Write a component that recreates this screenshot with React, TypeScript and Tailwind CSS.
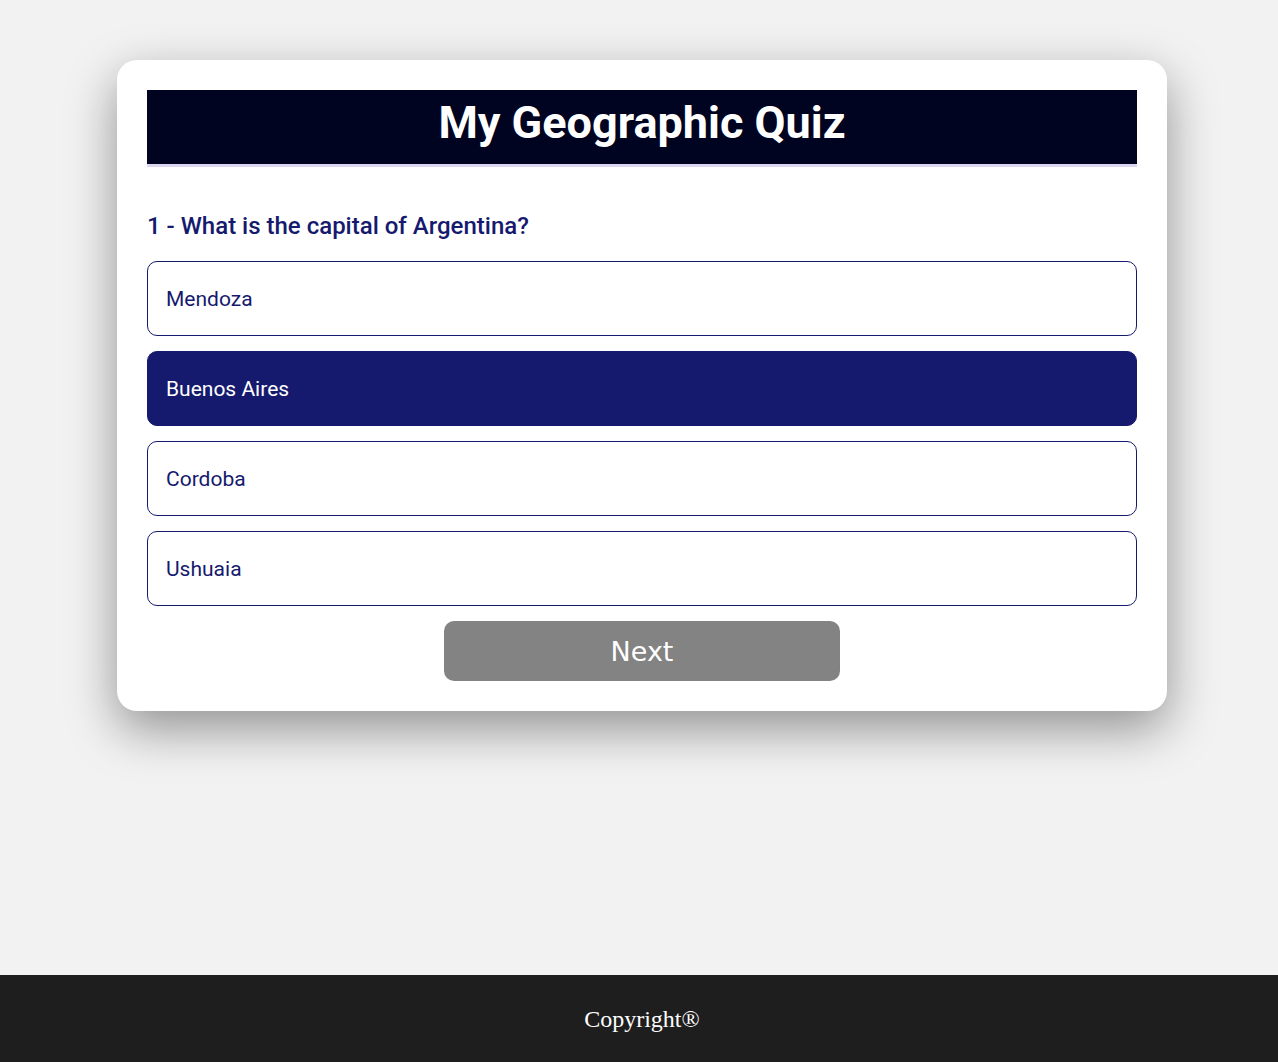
const options = ["Mendoza", "Buenos Aires", "Cordoba", "Ushuaia"];

export default function App() {
  const selected = 1;
  return (
    <div className="flex min-h-screen flex-col bg-[#f2f2f2] font-['Roboto',sans-serif]">
      <main className="flex-1 pt-[60px]">
        <section className="ml-[117px] w-[1050px] rounded-[20px] bg-white p-[30px] shadow-[0_18px_50px_rgba(0,0,0,0.4)]">
          <header className="border-b-[3px] border-[#dcd6f0] bg-[#000420] pb-[15px] pt-[7px] text-center">
            <h1 className="text-[45px] leading-[52px] font-bold text-white">My Geographic Quiz</h1>
          </header>
          <h2 className="mt-[43px] mb-[19px] text-[24px] leading-[32px] font-medium text-[#151a6e]">
            1 - What is the capital of Argentina?
          </h2>
          <div className="flex flex-col gap-[15px]">
            {options.map((opt, i) => (
              <button
                key={opt}
                type="button"
                className={
                  i === selected
                    ? "h-[75px] rounded-[10px] border border-[#151a6e] bg-[#151a6e] px-[18px] pt-[2px] text-left text-[21px] text-white"
                    : "h-[75px] rounded-[10px] border border-[#151a6e] bg-white px-[18px] pt-[2px] text-left text-[21px] text-[#151a6e]"
                }
              >
                {opt}
              </button>
            ))}
          </div>
          <div className="mt-[15px] flex justify-center">
            <button
              type="button"
              className="h-[60px] w-[396px] rounded-[10px] bg-[#838383] pt-[2px] font-['DejaVu_Sans',sans-serif] text-[27px] text-white"
            >
              Next
            </button>
          </div>
        </section>
      </main>
      <footer className="flex h-[87px] items-center justify-center bg-[#1e1e1e] pl-[6px] font-['Liberation_Serif',serif] text-[24px] text-white">
        Copyright®
      </footer>
    </div>
  );
}
